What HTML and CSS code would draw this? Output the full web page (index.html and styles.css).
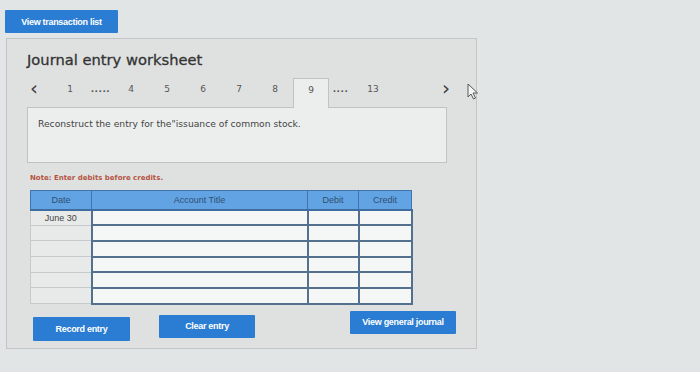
FILE: index.html
```html
<!DOCTYPE html>
<html>
<head>
<meta charset="utf-8">
<link rel="stylesheet" href="styles.css">
</head>
<body>
<div class="page">
  <button class="btn btn-top">View transaction list</button>
  <section class="panel">
    <h1 class="title">Journal entry worksheet</h1>
    <nav class="pager">
      <span class="arrow prev">&#8249;</span>
      <span class="pg">1</span>
      <span class="dots d5">.....</span>
      <span class="pg">4</span>
      <span class="pg">5</span>
      <span class="pg">6</span>
      <span class="pg">7</span>
      <span class="pg">8</span>
      <span class="pg tab">9</span>
      <span class="dots d4">....</span>
      <span class="pg wide">13</span>
      <span class="arrow next">&#8250;</span>
    </nav>
    <div class="prompt">Reconstruct the entry for the"issuance of common stock.</div>
    <p class="note">Note: Enter debits before credits.</p>
    <table class="grid">
      <thead>
        <tr><th class="c-date">Date</th><th class="c-acct">Account Title</th><th class="c-num">Debit</th><th class="c-num2">Credit</th></tr>
      </thead>
      <tbody>
        <tr><td class="date">June 30</td><td class="in"></td><td class="in"></td><td class="in"></td></tr>
        <tr><td class="date"></td><td class="in"></td><td class="in"></td><td class="in"></td></tr>
        <tr><td class="date"></td><td class="in"></td><td class="in"></td><td class="in"></td></tr>
        <tr><td class="date"></td><td class="in"></td><td class="in"></td><td class="in"></td></tr>
        <tr><td class="date"></td><td class="in"></td><td class="in"></td><td class="in"></td></tr>
        <tr><td class="date"></td><td class="in"></td><td class="in"></td><td class="in"></td></tr>
      </tbody>
    </table>
    <div class="actions">
      <button class="btn btn-record">Record entry</button>
      <button class="btn btn-clear">Clear entry</button>
      <button class="btn btn-view">View general journal</button>
    </div>
    <svg class="cursor" width="12" height="17" viewBox="0 0 12 17"><path d="M1 1 L1 14 L4 11 L6.5 16 L8.5 15 L6 10 L10.5 10 Z" fill="#f4f6f6" stroke="#555" stroke-width="1"/></svg>
  </section>
</div>
</body>
</html>
```
FILE: styles.css
```css
* { box-sizing: border-box; }
html, body { margin: 0; padding: 0; }
body {
  width: 700px;
  height: 372px;
  background: #e2e5e6;
  font-family: "DejaVu Sans", Verdana, sans-serif;
  overflow: hidden;
}
.page {
  padding: 10px 0 0 5px;
}
.btn {
  display: block;
  flex-shrink: 0;
  border: none;
  background: #2a7dd2;
  color: #fff;
  font-family: "Liberation Sans", Arial, sans-serif;
  font-weight: bold;
  font-size: 9px;
  letter-spacing: -0.3px;
  padding: 0;
  text-align: center;
  border-radius: 1px;
}
.btn-top {
  width: 113px;
  height: 23px;
}
.panel {
  position: relative;
  margin: 5px 0 0 1px;
  width: 471px;
  height: 311px;
  background: #dfe1e1;
  border: 1px solid #c3c6c6;
  padding: 11px 29px 0 20px;
}
.title {
  margin: 0;
  font-size: 14.7px;
  line-height: 20px;
  font-weight: normal;
  color: #333;
  -webkit-text-stroke: 0.3px #333;
}
.pager {
  display: flex;
  align-items: stretch;
  height: 29px;
  margin-top: 8px;
  font-size: 9px;
  color: #555;
}
.pager span {
  display: flex;
  align-items: center;
  justify-content: center;
  padding-bottom: 7px;
}
.arrow {
  font-size: 20px;
  color: #444;
  width: 14px;
}
.pager .arrow { padding-bottom: 9px; }
.prev { margin-right: 11px; }
.next { margin-left: auto; margin-right: -6px; }
.pg { width: 36px; }
.pg.wide { width: 42px; }
.dots {
  font-weight: bold;
  letter-spacing: 0.5px;
}
.pager .dots { padding-bottom: 8px; }
.d5 { width: 25px; }
.d4 { width: 23px; }
.tab {
  background: #eceeee;
  border: 1px solid #bfc3c3;
  border-bottom: none;
  position: relative;
  z-index: 1;
  margin-bottom: -1px;
}
.prompt {
  height: 56px;
  background: #eceeee;
  border: 1px solid #bfc3c3;
  padding: 10px 10px;
  font-size: 9.2px;
  color: #444;
}
.note {
  margin: 11px 0 0 3px;
  font-size: 7px;
  font-weight: bold;
  color: #b5533f;
  line-height: 9px;
}
.grid {
  margin: 7px 0 0 3px;
  border-collapse: collapse;
  width: 381px;
  font-family: "Liberation Sans", Arial, sans-serif;
  font-size: 9px;
  table-layout: fixed;
}
.grid th {
  background: #62a3e3;
  color: #2f4f72;
  font-weight: normal;
  height: 19px;
  border: 1px solid #3f74ac;
  padding: 0;
  border-bottom: 2px solid #3f6da0;
}
.c-date { width: 61px; }
.c-acct { width: 216px; }
.c-num { width: 51px; }
.c-num2 { width: 53px; }
.grid td {
  height: 15.7px;
  padding: 0;
}
.grid td.date {
  background: #e8eaea;
  border: 1px solid #c7cacc;
  text-align: center;
  color: #444;
}
.grid td.in {
  background: #f5f6f6;
  border: 2px solid #53708f;
}
.actions {
  display: flex;
  align-items: flex-start;
  margin: 10px 0 0 6px;
}
.btn-record {
  width: 97px;
  height: 24px;
  margin-top: 2px;
}
.btn-clear {
  width: 96px;
  height: 23px;
  margin-left: 29px;
}
.btn-view {
  width: 106px;
  height: 23px;
  margin-left: 95px;
  margin-top: -4px;
}
.cursor {
  position: absolute;
  left: 460px;
  top: 44px;
}
```
